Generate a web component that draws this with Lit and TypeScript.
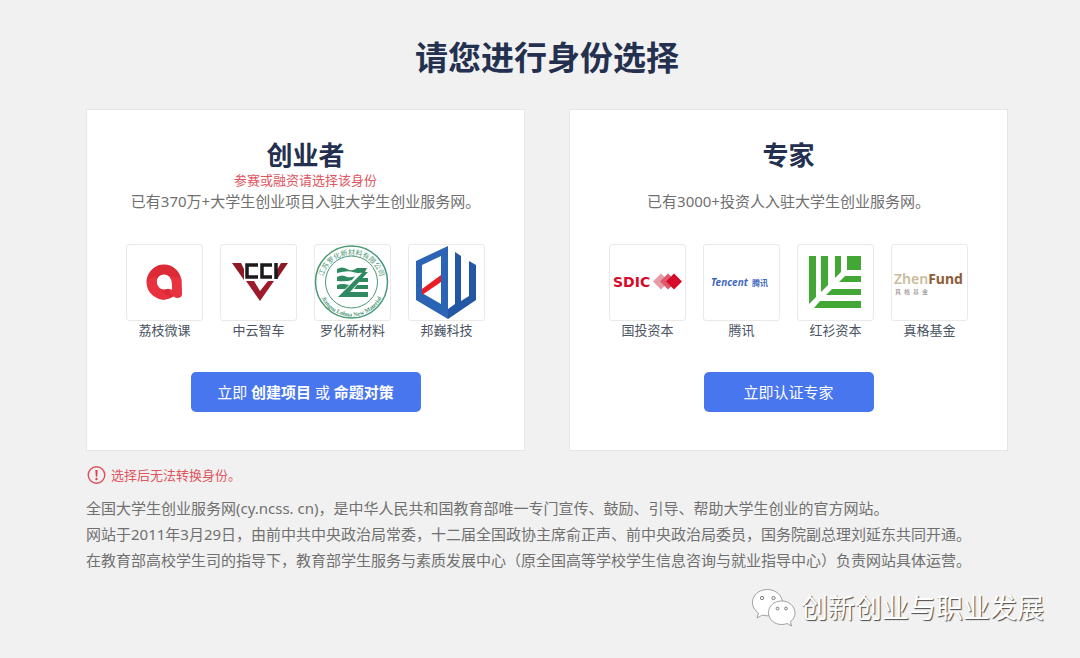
import { LitElement, html, svg, css, nothing, type TemplateResult } from "lit";
import { customElement, property } from "lit/decorators.js";

interface Brand {
  name: string;
  logo: TemplateResult;
}

const lizhi = svg`
  <circle cx="38" cy="38" r="12.5" fill="none" stroke="#dc2a36" stroke-width="10"></circle>
  <path d="M44 32 L55 34 Q56 40 56 50 Q56 54 51 54 Q47 54 43 47 Z" fill="#e8323f"></path>
  <path d="M30 33 Q31 47 45 53 Q40 57 33 55 Q22 50 21 39 Q22 32 30 33 Z" fill="#e8323f"></path>
  <path d="M31 38 Q32 31 38 31 Q46 32 46 40 V46 Q43 44 38 45 Q31 44 31 38 Z" fill="#fff"></path>`;

const cci = svg`
  <path d="M12 19 H21 L24 25 V36 Z M68 19 H61 L57 26 V35 Z" fill="#8f1a26"></path>
  <path d="M26 37 H34 L40 47 L48 37 H54 L40 57 Z" fill="#9d1b2a"></path>
  <path d="M38 21 H27 V33 H38 M52 21 H42 V33 H52 M56 19 V35" fill="none" stroke="#1c1a1b" stroke-width="3.500"></path>`;

const luohua = svg`
  <defs>
    <path id="upper" d="M10 49 A29 29 0 1 1 65 49"></path>
    <path id="lower" d="M4 39 A33.500 33.500 0 0 0 71 39"></path>
  </defs>
  <circle cx="37.500" cy="38" r="36" fill="#fff" stroke="#4b9876" stroke-width="1.500"></circle>
  <circle cx="37.500" cy="38" r="26" fill="none" stroke="#4b9876" stroke-width="1"></circle>
  <text class="ring-top"><textPath href="#upper" startOffset="50%" text-anchor="middle">江苏罗化新材料有限公司</textPath></text>
  <text class="ring-bottom"><textPath href="#lower" startOffset="50%" text-anchor="middle">Jiangsu Lohua New Material</textPath></text>
  <path d="M23 25 Q28 22 33 25 T43 24 H53 L51 28 Q44 30 39 28 T23 29 Z
    M23 33 Q28 30 33 33 Q37 34 41 32 L38 36 Q33 38 23 37 Z
    M23 41 Q28 39 35 41 L31 45 H23 Z
    M49 28 H54 L36 48 H54 V53 H24 Z M43 41 H54 V45 H40 Z M47 34 H54 V38 H44 Z" fill="#2f8961"></path>`;

const bangwei = svg`
  <path fill-rule="evenodd" d="M8 17 L40 2 V75 L8 56 Z M14 21 V49 L33 60 V12 Z" fill="#2b63b5"></path>
  <path d="M14 45 L33 31 V38 L14 51 Z" fill="#ec1c24"></path>
  <path d="M47 8 L53 12 V57 L61 52 V17 L68 21 V56 L40 75 V65 L47 60 Z" fill="#2457a3"></path>`;

const sdic = svg`
  <path d="M44 37.500 L52 29.500 L60 37.500 L52 45.500 Z" fill="#e79ca5"></path>
  <path d="M51 37.500 L59 29.500 L67 37.500 L59 45.500 Z" fill="#dc5a6b"></path>
  <path d="M57 37.500 L65 29.500 L73 37.500 L65 45.500 Z" fill="#d80a2b"></path>
  <text class="sdic" x="4" y="43">SDIC</text>`;

const tencent = svg`
  <text class="tencent" x="8" y="42">Tencent</text>
  <text class="tencent-cn" x="49" y="42">腾讯</text>`;

const sequoia = svg`
  <path d="M12 12 H19 V53 L12 60 Z M24 12 H31 V41 L24 48 Z M38 12 H44 V28 L38 34 Z
    M50 12 H64 V26 H50 Z M48 32 H64 V38 H42 Z M35 45 H64 V51 H29 Z M23 57 H64 V64 H17 Z" fill="#43a735"></path>`;

const zhenfund = svg`
  <text class="zhen" x="3" y="40">Zhen<tspan class="fund">Fund</tspan></text>
  <text class="zhen-cn" x="4 13 22 31" y="50">真格基金</text>`;

const founderBrands: Brand[] = [
  { name: "荔枝微课", logo: lizhi },
  { name: "中云智车", logo: cci },
  { name: "罗化新材料", logo: luohua },
  { name: "邦巍科技", logo: bangwei },
];

const expertBrands: Brand[] = [
  { name: "国投资本", logo: sdic },
  { name: "腾讯", logo: tencent },
  { name: "红衫资本", logo: sequoia },
  { name: "真格基金", logo: zhenfund },
];

@customElement("identity-card")
class IdentityCard extends LitElement {
  @property() heading = "";
  @property() hint = "";
  @property() description = "";
  @property({ attribute: false }) brands: Brand[] = [];

  static styles = css`
    :host {
      display: flex;
      flex-direction: column;
      align-items: center;
      box-sizing: border-box;
      padding: 29px 24px 38px;
      border: 1px solid #e6e6e6;
      background: #fff;
      text-align: center;
    }
    .heading {
      margin: 0;
      font-size: 26px;
      line-height: 32px;
      font-weight: 700;
      color: #24304f;
    }
    .hint {
      margin: 0;
      min-height: 18px;
      font-size: 13px;
      line-height: 18px;
      color: #e05560;
    }
    .description {
      margin: 0 0 31px;
      font-size: 15px;
      line-height: 24px;
      color: #707070;
    }
    .brands {
      display: flex;
      justify-content: center;
      gap: 17px;
      margin: 0 0 33px;
      padding: 0;
      list-style: none;
    }
    .brand {
      display: flex;
      flex-direction: column;
      align-items: center;
      width: 77px;
      font-size: 13px;
      line-height: 18px;
      white-space: nowrap;
      color: #4a5463;
    }
    .logo {
      box-sizing: border-box;
      width: 77px;
      height: 77px;
      border: 1px solid #e9e9e9;
      border-radius: 3px;
    }
    .logo svg {
      display: block;
      margin: -1px;
      width: 77px;
      height: 77px;
    }
    .ring-top {
      font-size: 7px;
      fill: #4b9876;
    }
    .ring-bottom {
      font: 700 6px "Liberation Serif", serif;
      fill: #4b9876;
    }
    .sdic {
      font: 700 14px "DejaVu Sans", sans-serif;
      fill: #d80a2b;
    }
    .tencent {
      font: italic 700 10px "Noto Sans", sans-serif;
      fill: #3f69c0;
    }
    .tencent-cn {
      font-size: 8px;
      font-weight: 700;
      fill: #3f69c0;
    }
    .zhen {
      font: 600 14px "Noto Sans", sans-serif;
      fill: #c9bb9d;
    }
    .fund {
      font-weight: 700;
      fill: #8d5c35;
    }
    .zhen-cn {
      font-size: 6px;
      fill: #8a8078;
    }
  `;

  render() {
    return html`
      <h2 class="heading">${this.heading}</h2>
      <p class="hint">${this.hint || nothing}</p>
      <p class="description">${this.description}</p>
      <ul class="brands">
        ${this.brands.map(
          (brand) => html`
            <li class="brand">
              <div class="logo"><svg viewBox="0 0 77 77" aria-hidden="true">${brand.logo}</svg></div>
              <span>${brand.name}</span>
            </li>
          `
        )}
      </ul>
      <slot></slot>
    `;
  }
}

@customElement("app-root")
class AppRoot extends LitElement {
  static styles = css`
    :host {
      display: flex;
      flex-direction: column;
      box-sizing: border-box;
      min-height: 100vh;
      padding: 34px 72px 28px 86px;
      background: #f1f1f1;
      font-family: "Noto Sans", "Noto Sans CJK SC", sans-serif;
      color: #707070;
    }
    .title {
      margin: 0 0 27px;
      font-size: 33px;
      line-height: 48px;
      font-weight: 700;
      text-align: center;
      color: #24304f;
    }
    .cards {
      display: grid;
      grid-template-columns: 1fr 1fr;
      gap: 44px;
    }
    .action {
      height: 40px;
      min-width: 170px;
      padding: 0 24px;
      border: 0;
      border-radius: 5px;
      background: #4876ee;
      color: #fff;
      font-family: inherit;
      font-size: 15px;
      line-height: 24px;
      cursor: pointer;
    }
    .action.wide {
      min-width: 230px;
    }
    .warning {
      display: flex;
      align-items: center;
      gap: 5px;
      margin: 14px 0 10px;
      font-size: 13px;
      line-height: 20px;
      color: #e05560;
    }
    .warning svg {
      width: 20px;
      height: 20px;
    }
    .about {
      margin: 0;
      font-size: 15px;
      line-height: 26px;
    }
    .signature {
      display: flex;
      justify-content: flex-end;
      align-items: center;
      gap: 5px;
      margin: 15px -36px 0 0;
      font-size: 27px;
      line-height: 40px;
      color: #fff;
      text-shadow: 1px 1px 1px #4a4a4a;
    }
    .signature svg {
      width: 46px;
      height: 40px;
    }
  `;

  render() {
    return html`
      <h1 class="title">请您进行身份选择</h1>
      <main class="cards">
        <identity-card
          heading="创业者"
          hint="参赛或融资请选择该身份"
          description="已有370万+大学生创业项目入驻大学生创业服务网。"
          .brands=${founderBrands}
        >
          <button class="action wide" type="button">立即 <b>创建项目</b> 或 <b>命题对策</b></button>
        </identity-card>
        <identity-card
          heading="专家"
          description="已有3000+投资人入驻大学生创业服务网。"
          .brands=${expertBrands}
        >
          <button class="action" type="button">立即认证专家</button>
        </identity-card>
      </main>
      <p class="warning">
        <svg viewBox="0 0 20 20" aria-hidden="true">
          <circle cx="10.500" cy="10" r="8.300" fill="none" stroke="#dc4f5b" stroke-width="1.400"></circle>
          <path d="M9.400 5 H11.600 L11.200 11.800 H9.800 Z" fill="#dc3f4d"></path>
          <circle cx="10.500" cy="14" r="1.200" fill="#dc3f4d"></circle>
        </svg>
        <span>选择后无法转换身份。</span>
      </p>
      <p class="about">
        全国大学生创业服务网(cy.ncss. cn)，是中华人民共和国教育部唯一专门宣传、鼓励、引导、帮助大学生创业的官方网站。<br />
        网站于2011年3月29日，由前中共中央政治局常委，十二届全国政协主席俞正声、前中央政治局委员，国务院副总理刘延东共同开通。<br />
        在教育部高校学生司的指导下，教育部学生服务与素质发展中心（原全国高等学校学生信息咨询与就业指导中心）负责网站具体运营。
      </p>
      <div class="signature">
        <svg viewBox="0 0 46 40" aria-hidden="true">
          <g fill="#fff" stroke="#8a8a8a" stroke-width="0.800" stroke-linejoin="round">
            <path d="M17.500 1.500 C9 1.500 2.500 7 2.500 14.500 C2.500 19 5 22.500 8.500 25 L7 30 L12.500 27 C14 27.500 16 27.800 18 27.800 C26 27.500 32.500 22 32.500 14.500 C32 7 25.500 1.500 17.500 1.500 Z"></path>
            <path d="M31.500 13 C24 13 18.500 18 18.500 24.700 C18.500 31.500 24.500 36.500 31.500 36.500 C33.500 36.500 35.500 36.200 37.200 35.500 L41.500 38 L40.500 33.500 C43.500 31.500 45 28.500 45 24.700 C44.500 18 39 13 31.500 13 Z"></path>
          </g>
          <g fill="#f1f1f1" stroke="#777" stroke-width="0.900">
            <circle cx="12" cy="10" r="1.700"></circle>
            <circle cx="23.500" cy="10" r="1.700"></circle>
            <circle cx="27.500" cy="20.500" r="1.400"></circle>
            <circle cx="36" cy="20.500" r="1.400"></circle>
          </g>
        </svg>
        <span>创新创业与职业发展</span>
      </div>
    `;
  }
}
